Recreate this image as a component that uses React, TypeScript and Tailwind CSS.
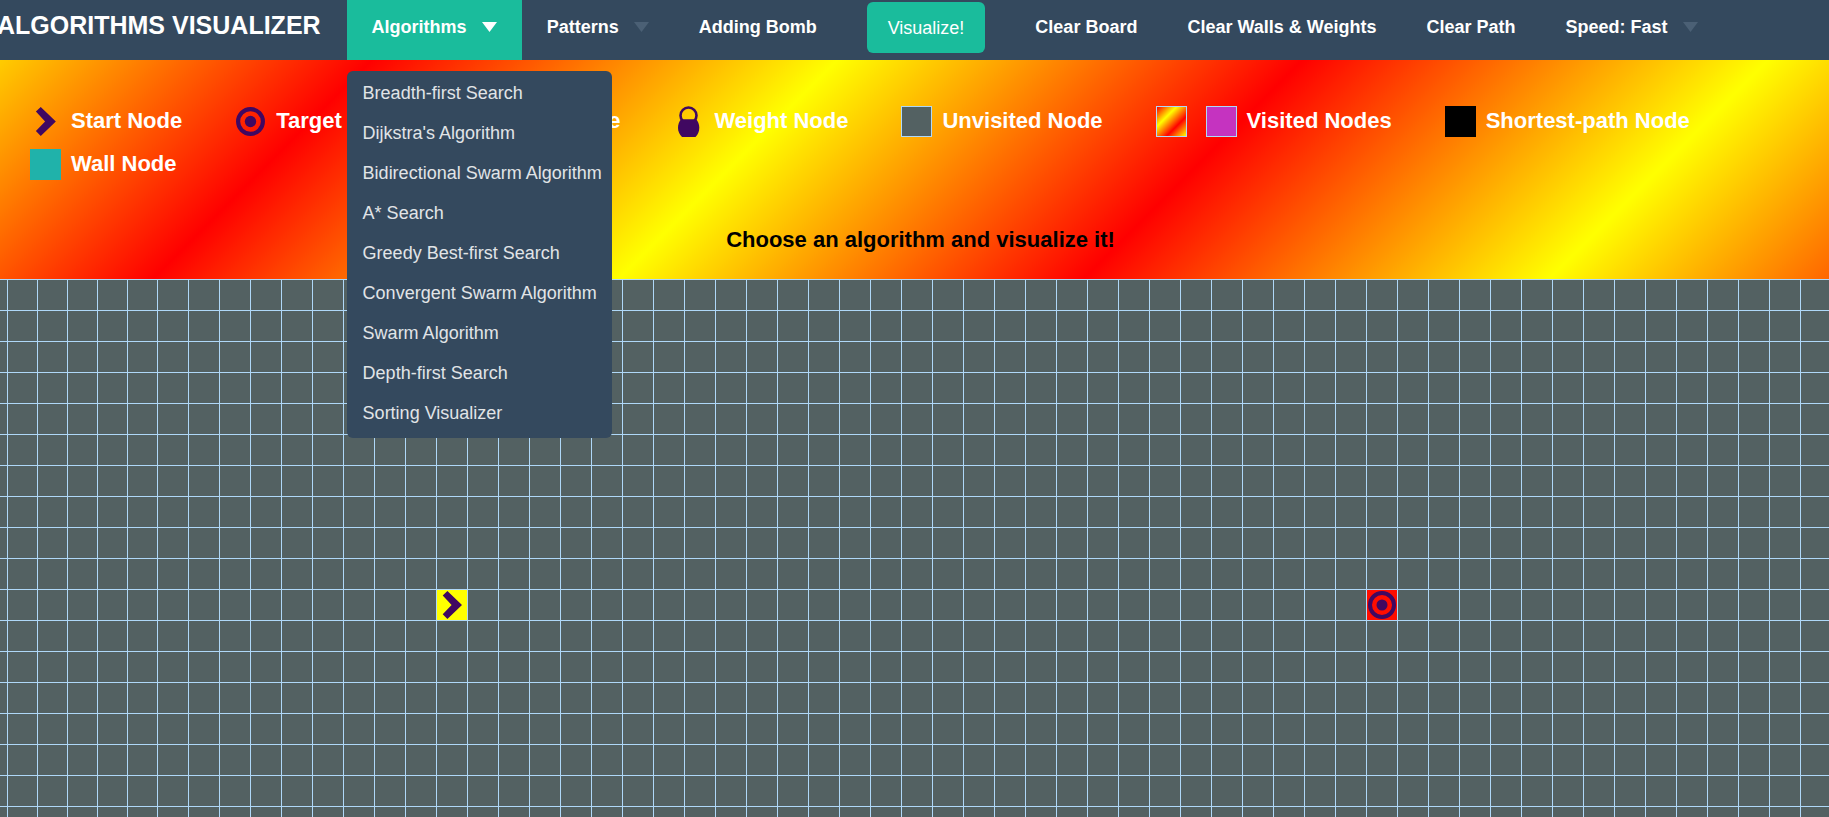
import React from "react";

const ALGORITHMS = [
  "Breadth-first Search",
  "Dijkstra's Algorithm",
  "Bidirectional Swarm Algorithm",
  "A* Search",
  "Greedy Best-first Search",
  "Convergent Swarm Algorithm",
  "Swarm Algorithm",
  "Depth-first Search",
  "Sorting Visualizer",
];

const ROWS = 18;
const COLS = 60;
const NARROW_COLS = 5;
const START = { row: 10, col: 15 };
const TARGET = { row: 10, col: 45 };

function StartIcon({ className }: { className: string }) {
  return (
    <svg viewBox="0 0 30 30" className={className} fill="#400861" aria-hidden="true">
      <path d="M5.7 5.4 10.4 1 25 15 10.4 29 5.7 24.3 14.6 15Z" />
    </svg>
  );
}

function TargetIcon({ className }: { className: string }) {
  return (
    <svg viewBox="0 0 30 30" className={className} aria-hidden="true">
      <circle cx="15" cy="15" r="12" fill="none" stroke="#400861" strokeWidth="4" />
      <circle cx="15" cy="15" r="5.5" fill="#400861" />
    </svg>
  );
}

function BombIcon({ className }: { className: string }) {
  return (
    <svg viewBox="0 0 30 30" className={className} fill="#400861" aria-hidden="true">
      <circle cx="13" cy="18" r="10" />
      <path d="m19 9 5-5 2 2-5 5Z" />
    </svg>
  );
}

function WeightIcon({ className }: { className: string }) {
  return (
    <svg viewBox="0 0 31 31" className={className} fill="#400861" aria-hidden="true">
      <circle cx="15.5" cy="9.5" r="8" fill="none" stroke="#400861" strokeWidth="2.6" />
      <path d="M8 13.3H23.2C25 15.5 26.3 18.5 26.3 21.8C26.3 25.5 25 28.6 22.5 31H9C6.5 28.6 5 25.5 5 21.8C5 18.5 6.2 15.5 8 13.3Z" />
    </svg>
  );
}

function Caret({ className }: { className: string }) {
  return (
    <svg viewBox="0 0 15 10" className={className} fill="currentColor" aria-hidden="true">
      <path d="M0 0H15L7.5 10Z" />
    </svg>
  );
}

function NavButton({ children }: { children: React.ReactNode }) {
  return (
    <button type="button" className="flex h-full items-center gap-[15px] px-[25px] pb-[6px] text-lg font-bold whitespace-nowrap text-white">
      {children}
    </button>
  );
}

function LegendItem({ label, children }: { label: string; children: React.ReactNode }) {
  return (
    <li className="flex items-center gap-[10px] whitespace-nowrap">
      {children}
      <span className="pb-0.5 leading-[29px]">{label}</span>
    </li>
  );
}

function cellWidth(col: number) {
  if (col === 0) return "w-2";
  return col <= NARROW_COLS ? "w-[30px]" : "w-[31px]";
}

function Cell({ row, col }: { row: number; col: number }) {
  const isStart = row === START.row && col === START.col;
  const isTarget = row === TARGET.row && col === TARGET.col;
  const fill = isStart ? "bg-[#ffff00]" : isTarget ? "bg-[#ff0d00]" : "";
  return (
    <div className={`h-[31px] shrink-0 border-r border-b border-[#afd8f8] ${cellWidth(col)} ${fill}`}>
      {isStart && <StartIcon className="size-[30px]" />}
      {isTarget && <TargetIcon className="size-[30px]" />}
    </div>
  );
}

export default function App() {
  return (
    <div className="flex h-screen flex-col overflow-hidden bg-[#536162] font-['Liberation_Sans',Arial,sans-serif]">
      <nav className="flex h-[60px] shrink-0 items-stretch bg-[#34495e]">
        <a href="#" className="-ml-[3px] flex items-center pr-[26px] pb-[9px] text-[25px] font-bold whitespace-nowrap text-white">
          ALGORITHMS VISUALIZER
        </a>
        <div className="relative bg-[#1abc9c]">
          <NavButton>
            Algorithms
            <Caret className="h-[10px] w-[15px]" />
          </NavButton>
          <ul className="absolute top-[71px] left-0 z-10 rounded-md bg-[#34495e] pt-0.5 pb-[5px]">
            {ALGORITHMS.map((name) => (
              <li key={name}>
                <a href="#" className="block pr-[10px] pl-4 text-lg leading-[40px] whitespace-nowrap text-[#e1e4e7]">
                  {name}
                </a>
              </li>
            ))}
          </ul>
        </div>
        <NavButton>
          Patterns
          <Caret className="h-[10px] w-[15px] text-[#4b6075]" />
        </NavButton>
        <NavButton>Adding Bomb</NavButton>
        <button type="button" className="mx-[25px] mt-[2px] h-[51px] rounded-md bg-[#1abc9c] px-[21px] text-lg text-white">
          Visualize!
        </button>
        <NavButton>Clear Board</NavButton>
        <NavButton>Clear Walls &amp; Weights</NavButton>
        <NavButton>Clear Path</NavButton>
        <NavButton>
          Speed: Fast
          <Caret className="h-[10px] w-[15px] text-[#4b6075]" />
        </NavButton>
      </nav>

      <section className="shrink-0 bg-[repeating-linear-gradient(135deg,#ffff00_-66px,#ff0000_263px,#ffff00_592px)] px-[30px] pt-[46px] pb-6 text-[22px] font-bold">
        <ul className="flex flex-wrap gap-x-[53px] gap-y-3 text-white">
          <LegendItem label="Start Node">
            <StartIcon className="size-[31px]" />
          </LegendItem>
          <LegendItem label="Target Node">
            <TargetIcon className="size-[31px]" />
          </LegendItem>
          <LegendItem label="Bomb Node">
            <BombIcon className="size-[31px]" />
          </LegendItem>
          <LegendItem label="Weight Node">
            <WeightIcon className="size-[31px]" />
          </LegendItem>
          <LegendItem label="Unvisited Node">
            <span className="size-[31px] border border-[#afd8f8] bg-[#536162]" />
          </LegendItem>
          <LegendItem label="Visited Nodes">
            <span className="mr-[9px] size-[31px] border border-[#afd8f8] bg-[linear-gradient(135deg,#ff0000,#ffff00,#ff0000,#ffff00)]" />
            <span className="size-[31px] border border-[#afd8f8] bg-[#c533c0]" />
          </LegendItem>
          <LegendItem label="Shortest-path Node">
            <span className="size-[31px] bg-black" />
          </LegendItem>
          <LegendItem label="Wall Node">
            <span className="size-[31px] bg-[#20b2aa]" />
          </LegendItem>
        </ul>
        <p className="mt-11 pl-3 text-center leading-[31px] text-black">Choose an algorithm and visualize it!</p>
      </section>

      <main className="min-h-0 flex-1 overflow-hidden border-t border-[#afd8f8]">
        {Array.from({ length: ROWS }, (_, row) => (
          <div key={row} className="flex">
            {Array.from({ length: COLS }, (_, col) => (
              <Cell key={col} row={row} col={col} />
            ))}
          </div>
        ))}
      </main>
    </div>
  );
}
